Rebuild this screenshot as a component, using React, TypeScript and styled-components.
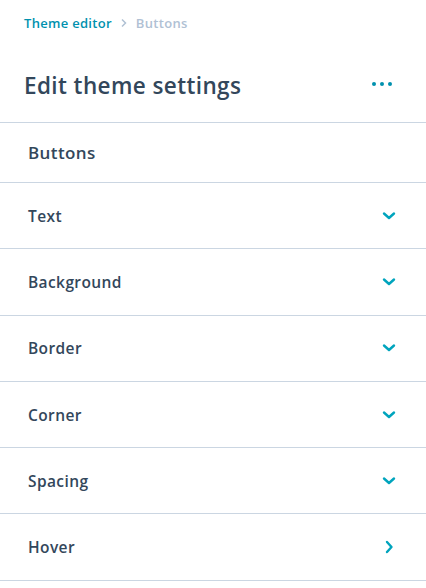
import React from "react";
import styled, { createGlobalStyle } from "styled-components";

const Global = createGlobalStyle`
  html, body { margin: 0; padding: 0; background: #fff; }
  body { font-family: "Open Sans", "Noto Sans", sans-serif; color: #33475b; }
`;

const Panel = styled.div`
  width: 426px;
  display: flex;
  flex-direction: column;
`;

const Crumbs = styled.nav`
  display: flex;
  align-items: center;
  gap: 8px;
  padding: 14px 24px 0;
  height: 18px;
  font-size: 13px;
  font-weight: 600;
  letter-spacing: 0.3px;
`;

const CrumbLink = styled.span`
  color: #0091ae;
`;

const CrumbCurrent = styled.span`
  color: #b0c1d4;
`;

const Header = styled.div`
  display: flex;
  align-items: center;
  justify-content: space-between;
  box-sizing: border-box;
  padding: 16px 34px 0 24px;
  height: 91px;
  border-bottom: 1px solid #cbd6e2;
`;

const Title = styled.h1`
  margin: 0;
  font-size: 22.5px;
  font-weight: 600;
  letter-spacing: 0.4px;
  color: #33475b;
`;

const Dots = styled.div`
  display: flex;
  gap: 4px;
  padding-bottom: 2px;
`;

const Dot = styled.span`
  width: 4px;
  height: 4px;
  border-radius: 50%;
  background: #0091ae;
`;

const Section = styled.div`
  height: 59px;
  display: flex;
  align-items: center;
  padding: 0 28px;
  font-size: 17px;
  font-weight: 600;
  letter-spacing: 0.4px;
  border-bottom: 1px solid #cbd6e2;
`;

const Row = styled.div`
  height: 65.3px;
  display: flex;
  align-items: center;
  justify-content: space-between;
  padding: 0 30px 0 28px;
  font-size: 15.5px;
  font-weight: 600;
  letter-spacing: 0.4px;
  border-bottom: 1px solid #cbd6e2;
  box-sizing: content-box;
`;

const Icon = styled.svg`
  width: 14px;
  height: 14px;
  display: block;
`;

const Down = () => (
  <Icon viewBox="0 0 14 14">
    <path d="M2 4.5 L7 9 L12 4.5" fill="none" stroke="#00a4bd" strokeWidth="2.4" strokeLinecap="round" strokeLinejoin="round" />
  </Icon>
);

const Right = () => (
  <Icon viewBox="0 0 14 14">
    <path d="M5 2 L9.5 7 L5 12" fill="none" stroke="#00a4bd" strokeWidth="2.4" strokeLinecap="round" strokeLinejoin="round" />
  </Icon>
);

const rows: { label: string; open: boolean }[] = [
  { label: "Text", open: true },
  { label: "Background", open: true },
  { label: "Border", open: true },
  { label: "Corner", open: true },
  { label: "Spacing", open: true },
  { label: "Hover", open: false },
];

export default function App() {
  return (
    <>
      <Global />
      <Panel>
        <Crumbs>
          <CrumbLink>Theme editor</CrumbLink>
          <svg width="8" height="10" viewBox="0 0 8 10">
            <path d="M2 1.5 L5.5 5 L2 8.5" fill="none" stroke="#b0c1d4" strokeWidth="1.5" />
          </svg>
          <CrumbCurrent>Buttons</CrumbCurrent>
        </Crumbs>
        <Header>
          <Title>Edit theme settings</Title>
          <Dots>
            <Dot />
            <Dot />
            <Dot />
          </Dots>
        </Header>
        <Section>Buttons</Section>
        {rows.map((r) => (
          <Row key={r.label}>
            <span>{r.label}</span>
            {r.open ? <Down /> : <Right />}
          </Row>
        ))}
      </Panel>
    </>
  );
}
